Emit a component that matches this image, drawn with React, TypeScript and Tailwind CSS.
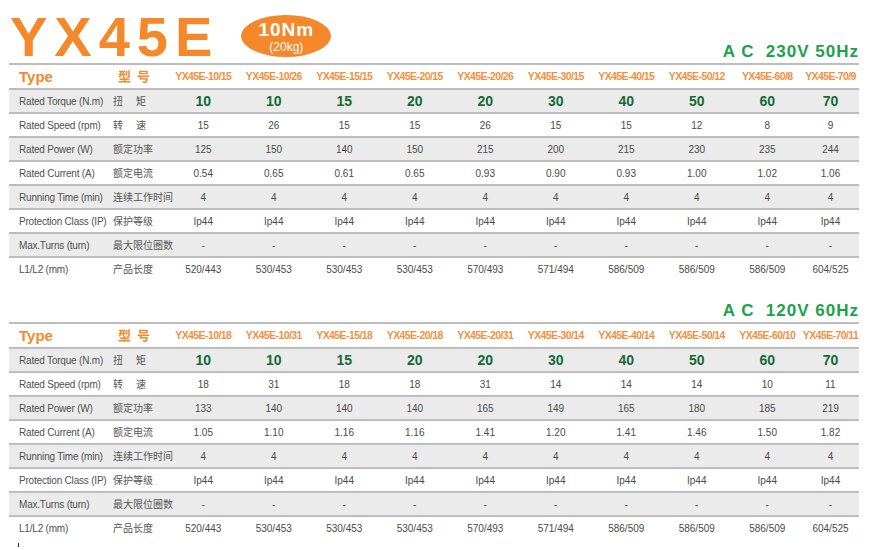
import React from "react";

type Spec = {
  voltage: string;
  models: string[];
  speed: string[];
  power: string[];
  current: string[];
};

const torque = ["10", "10", "15", "20", "20", "30", "40", "50", "60", "70"];
const lengths = ["520/443", "530/453", "530/453", "530/453", "570/493", "571/494", "586/509", "586/509", "586/509", "604/525"];

const tables: Spec[] = [
  {
    voltage: "A C  230V 50Hz",
    models: ["YX45E-10/15", "YX45E-10/26", "YX45E-15/15", "YX45E-20/15", "YX45E-20/26", "YX45E-30/15", "YX45E-40/15", "YX45E-50/12", "YX45E-60/8", "YX45E-70/9"],
    speed: ["15", "26", "15", "15", "26", "15", "15", "12", "8", "9"],
    power: ["125", "150", "140", "150", "215", "200", "215", "230", "235", "244"],
    current: ["0.54", "0.65", "0.61", "0.65", "0.93", "0.90", "0.93", "1.00", "1.02", "1.06"],
  },
  {
    voltage: "A C  120V 60Hz",
    models: ["YX45E-10/18", "YX45E-10/31", "YX45E-15/18", "YX45E-20/18", "YX45E-20/31", "YX45E-30/14", "YX45E-40/14", "YX45E-50/14", "YX45E-60/10", "YX45E-70/11"],
    speed: ["18", "31", "18", "18", "31", "14", "14", "14", "10", "11"],
    power: ["133", "140", "140", "140", "165", "149", "165", "180", "185", "219"],
    current: ["1.05", "1.10", "1.16", "1.16", "1.41", "1.20", "1.41", "1.46", "1.50", "1.82"],
  },
];

const cols = "grid grid-cols-[104px_55px_repeat(9,70.5px)_56px] items-center";

function Row({ en, cn, values, gray, bold }: { en: string; cn: React.ReactNode; values: string[]; gray: boolean; bold?: boolean }) {
  return (
    <div className={`${cols} h-[24px] border-t-2 border-[#bdbdbd] ${gray ? "bg-[#ebebeb]" : "bg-white"}`}>
      <div className="pl-[10px] text-[10px] tracking-[-0.2px] text-[#505050] whitespace-nowrap">{en}</div>
      <div className="text-[10px] text-[#555555] whitespace-nowrap">{cn}</div>
      {values.map((v, i) => (
        <div
          key={i}
          className={`text-center whitespace-nowrap ${bold ? "text-[14px] font-bold text-[#156a36]" : "text-[10px] text-[#4a4a4a]"}`}
        >
          {v}
        </div>
      ))}
    </div>
  );
}

function SpecTable({ spec }: { spec: Spec }) {
  const rows: { en: string; cn: React.ReactNode; values: string[]; bold?: boolean }[] = [
    {
      en: "Rated Torque (N.m)",
      cn: (
        <span className="flex gap-[13px]">
          <span>扭</span>
          <span>矩</span>
        </span>
      ),
      values: torque,
      bold: true,
    },
    {
      en: "Rated Speed (rpm)",
      cn: (
        <span className="flex gap-[13px]">
          <span>转</span>
          <span>速</span>
        </span>
      ),
      values: spec.speed,
    },
    { en: "Rated Power (W)", cn: "额定功率", values: spec.power },
    { en: "Rated Current (A)", cn: "额定电流", values: spec.current },
    { en: "Running Time (min)", cn: "连续工作时间", values: Array(10).fill("4") },
    { en: "Protection Class (IP)", cn: "保护等级", values: Array(10).fill("Ip44") },
    { en: "Max.Turns (turn)", cn: "最大限位圈数", values: Array(10).fill("-") },
    { en: "L1/L2 (mm)", cn: "产品长度", values: lengths },
  ];

  return (
    <div>
      <div className={`${cols} h-[25px] border-t-2 border-[#bdbdbd]`}>
        <div className="pl-[10px] text-[15px] font-bold text-[#f28a2e] leading-none">Type</div>
        <div className="flex gap-[6px] pl-[5px] text-[13px] font-bold text-[#f28a2e]">
          <span>型</span>
          <span>号</span>
        </div>
        {spec.models.map((m) => (
          <div key={m} className="text-center text-[10.5px] font-bold tracking-[-0.6px] text-[#f39040] whitespace-nowrap">
            {m}
          </div>
        ))}
      </div>
      {rows.map((r, i) => (
        <Row key={r.en} en={r.en} cn={r.cn} values={r.values} bold={r.bold} gray={i % 2 === 0} />
      ))}
    </div>
  );
}

export default function App() {
  return (
    <div className="w-[895px] h-[550px] bg-white px-[9px] overflow-hidden font-['Liberation_Sans','Noto_Sans_CJK_SC',sans-serif]">
      <div className="w-[850px]">
        <div className="flex h-[63px] items-start">
          <div className="mt-[9px] pl-[1px] text-[56px] font-bold leading-none tracking-[7px] text-[#f5882a]">YX45E</div>
          <div className="ml-[22px] mt-[15px] flex h-[42px] w-[90px] flex-col items-center justify-center gap-[2px] rounded-[50%] bg-[#f5882a] text-white">
            <span className="text-[19px] font-bold leading-none tracking-[1px]">10Nm</span>
            <span className="text-[12px] leading-none">(20kg)</span>
          </div>
          <div className="ml-auto self-end pb-[3px] text-[17px] font-bold leading-none tracking-[1px] text-[#1ca24c] whitespace-pre">
            {tables[0].voltage}
          </div>
        </div>
        <SpecTable spec={tables[0]} />
        <div className="flex h-[42px] items-end justify-end pb-[3px]">
          <div className="text-[17px] font-bold leading-none tracking-[1px] text-[#1ca24c] whitespace-pre">{tables[1].voltage}</div>
        </div>
        <SpecTable spec={tables[1]} />
        <div className="ml-[9px] mt-[4px] h-[4px] w-px bg-[#333333]" />
      </div>
    </div>
  );
}
